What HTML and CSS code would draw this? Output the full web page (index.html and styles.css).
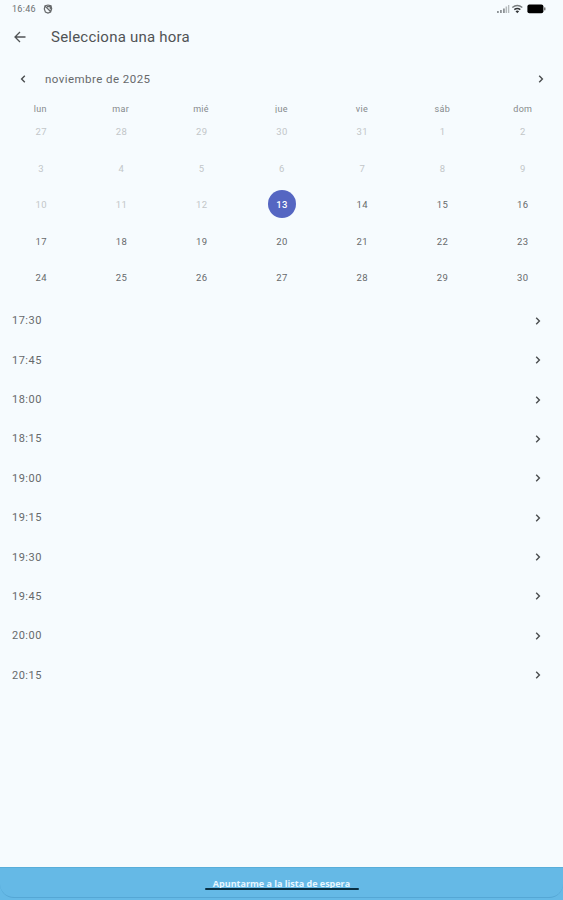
FILE: index.html
```html
<!DOCTYPE html>
<html lang="es">
<head>
<meta charset="utf-8">
<title>Selecciona una hora</title>
<link rel="stylesheet" href="styles.css">
</head>
<body>
<svg class="defs" width="0" height="0" aria-hidden="true">
  <symbol id="chevron" viewBox="0 0 8 10"><path d="M2.200 1.800 5.400 5 2.200 8.200"/></symbol>
</svg>
<div class="status">
  <span class="clock">16:46</span>
  <svg class="blocked" width="10" height="10" viewBox="0 0 10 10"><path d="M2 1.8 5 1l3 .8.7 3L7.6 8 5 9 2.400 8 1.300 5zM2 2l6 6M4 2.700h3.300v2.600"/></svg>
  <svg class="indicators" width="52" height="10" viewBox="0 0 52 10">
    <g fill="#8e9396"><path d="M1 7h1.800v2H1zM4 6h1.800v3H4zM7 4.500h1.800V9H7z"/><path fill="#b5babc" d="M9.600 2.500h1.500V9H9.600zM12 1h1.300v8H12z"/></g>
    <g class="wifi"><path stroke="#777c7e" d="M16.300 3.500q5-4 10 0"/><path d="M18.300 5.600q3-2.400 6 0"/><path fill="#303336" stroke="none" d="M19.500 7.200q1.800-1.300 3.600 0L21.300 9.200z"/></g>
    <rect x="31.400" y=".5" width="16" height="8.800" rx="2"/><rect x="48" y="3.300" width="1.500" height="3.200" rx=".7" fill="#777"/>
  </svg>
</div>
<header class="bar">
  <svg width="12" height="12" viewBox="0 0 12 12"><path d="M11.500 6H1.200M6 1 1 6l5 5"/></svg>
  <h1>Selecciona una hora</h1>
</header>
<div class="month">
  <svg class="chevron prev"><use href="#chevron"/></svg>
  <span class="label">noviembre de 2025</span>
  <svg class="chevron next"><use href="#chevron"/></svg>
</div>
<div class="week names"><span>lun</span><span>mar</span><span>mié</span><span>jue</span><span>vie</span><span>sáb</span><span>dom</span></div>
<main>
  <div class="week days">
    <span class="off">27</span><span class="off">28</span><span class="off">29</span><span class="off">30</span><span class="off">31</span><span class="off">1</span><span class="off">2</span>
    <span class="off">3</span><span class="off">4</span><span class="off">5</span><span class="off">6</span><span class="off">7</span><span class="off">8</span><span class="off">9</span>
    <span class="off">10</span><span class="off">11</span><span class="off">12</span><span class="selected">13</span><span>14</span><span>15</span><span>16</span>
    <span>17</span><span>18</span><span>19</span><span>20</span><span>21</span><span>22</span><span>23</span>
    <span>24</span><span>25</span><span>26</span><span>27</span><span>28</span><span>29</span><span>30</span>
  </div>
  <ul class="slots">
    <li>17:30<svg class="chevron"><use href="#chevron"/></svg></li>
    <li>17:45<svg class="chevron"><use href="#chevron"/></svg></li>
    <li>18:00<svg class="chevron"><use href="#chevron"/></svg></li>
    <li>18:15<svg class="chevron"><use href="#chevron"/></svg></li>
    <li>19:00<svg class="chevron"><use href="#chevron"/></svg></li>
    <li>19:15<svg class="chevron"><use href="#chevron"/></svg></li>
    <li>19:30<svg class="chevron"><use href="#chevron"/></svg></li>
    <li>19:45<svg class="chevron"><use href="#chevron"/></svg></li>
    <li>20:00<svg class="chevron"><use href="#chevron"/></svg></li>
    <li>20:15<svg class="chevron"><use href="#chevron"/></svg></li>
  </ul>
</main>
<footer class="wait"><span>Apuntarme a la lista de espera</span><div class="handle"></div></footer>
</body>
</html>
```
FILE: styles.css
```css
* { box-sizing: border-box; }
body {
  margin: 0;
  height: 900px;
  display: flex;
  flex-direction: column;
  overflow: hidden;
  background: #f6fbfe;
  color: #66696b;
  font-family: Roboto, "Liberation Sans", sans-serif;
}
svg { flex: none; }
.defs { position: absolute; }
.status { height: 18px; padding: 0 15px 0 12px; display: flex; align-items: center; font-size: 9px; letter-spacing: .3px; color: #6c7072; }
.blocked { margin-left: 7px; fill: none; stroke: #66696b; stroke-width: 1.2; }
.indicators { margin-left: auto; }
.wifi { fill: none; stroke: #303336; stroke-width: 1.5; }
.bar { height: 38px; padding-left: 14px; display: flex; align-items: center; gap: 25px; }
.bar svg { fill: none; stroke: #505355; stroke-width: 1.3; }
h1 { margin: 0; font-size: 15px; font-weight: 400; letter-spacing: .22px; color: #505355; }
.chevron { width: 8px; height: 10px; fill: none; stroke: #4a4d4f; stroke-width: 1.4; }
.month { height: 46px; padding: 0 18px 0 19px; display: flex; align-items: center; font-size: 11.500px; letter-spacing: .45px; }
.label { margin-left: 18px; }
.prev { transform: scaleX(-1); }
.next { margin-left: auto; }
.week { display: grid; grid-template-columns: repeat(7, 1fr); text-align: center; }
.names { height: 11px; overflow: hidden; font-size: 9px; line-height: 15px; letter-spacing: .3px; color: #85898b; }
.days { padding-left: 1px; grid-auto-rows: 36.600px; font-size: 9.500px; letter-spacing: .4px; line-height: 37.400px; }
.off { color: #c2c6c8; }
.selected { justify-self: center; align-self: center; width: 28px; height: 28px; border-radius: 50%; background: #5566c2; color: #fff; line-height: 29px; font-weight: 500; }
.slots { margin: 5.300px 0 0; padding: 0; list-style: none; }
.slots li { height: 39.350px; padding: 1px 21px 0 12px; display: flex; align-items: center; justify-content: space-between; font-size: 11px; line-height: 14px; letter-spacing: .5px; }
.slots .chevron { margin-bottom: 1px; }
.wait {
  position: relative;
  height: 33px;
  margin-top: auto;
  display: flex;
  flex-direction: column;
  align-items: center;
  background: #65b9e6;
  border-top: 1px solid #58aeda;
  color: #e7f6ff;
  font: 700 9px/14px "Open Sans", sans-serif;
  padding-top: 9px;
}
.wait::before { content: ""; position: absolute; inset: 0 0 2px; border-bottom: 1px solid #55a7d5; border-radius: 0 0 14px 14px; }
.handle { position: absolute; top: 20px; left: 205px; width: 154px; height: 2px; border-radius: 1px; background: #092f43; }
```
